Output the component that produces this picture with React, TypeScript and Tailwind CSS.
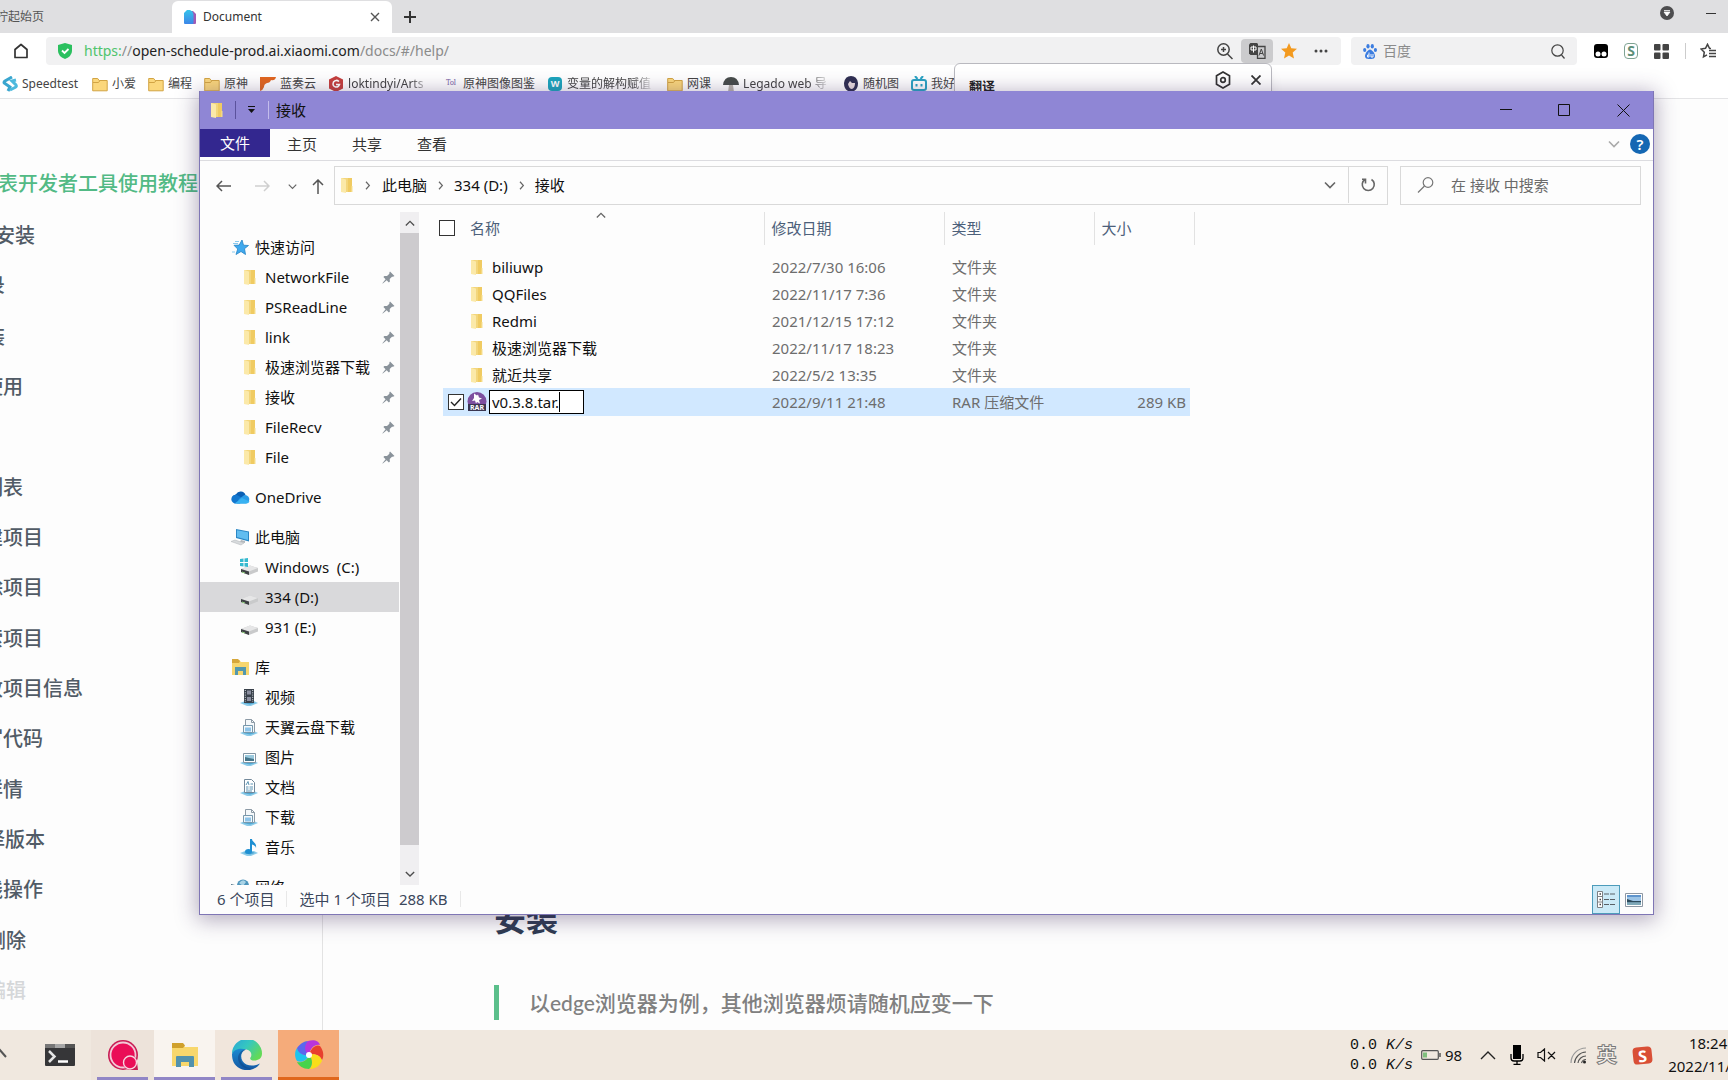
import type { ReactNode } from "react";

const docLinks = [
  { text: "IDE安装", width: "w-[35px]" },
  { text: "登录", width: "w-[5px]" },
  { text: "安装", width: "w-[5px]" },
  { text: "使用", width: "w-[23px]" },
  { text: "", width: "w-[23px]" },
  { text: "列表", width: "w-[23px]" },
  { text: "新建项目", width: "w-[43px]" },
  { text: "删除项目", width: "w-[43px]" },
  { text: "搜索项目", width: "w-[43px]" },
  { text: "修改项目信息", width: "w-[83px]" },
  { text: "编写代码", width: "w-[43px]" },
  { text: "详情", width: "w-[23px]" },
  { text: "选择版本", width: "w-[45px]" },
  { text: "在线操作", width: "w-[43px]" },
  { text: "删除", width: "w-[26px]" },
  { text: "编辑", width: "w-[26px]" },
];

const files = [
  { name: "biliuwp", date: "2022/7/30 16:06" },
  { name: "QQFiles", date: "2022/11/17 7:36" },
  { name: "Redmi", date: "2021/12/15 17:12" },
  { name: "极速浏览器下载", date: "2022/11/17 18:23" },
  { name: "就近共享", date: "2022/5/2 13:35" },
];

const quickAccess = ["NetworkFile", "PSReadLine", "link", "极速浏览器下载", "接收", "FileRecv", "File"];

function FolderIcon() {
  return (
    <svg width="13" height="16" viewBox="0 0 13 16" className="shrink-0">
      <path d="M1 1h7l4 0v14H1z" fill="#f3d67c" />
      <path d="M8 1h4v6l-1 8H8z" fill="#f0cb62" />
      <path d="M1 1l5 1.5V16L1 15z" fill="#fbe9a9" />
      <path d="M11.5 9h1v6h-1z" fill="#f8df8f" />
    </svg>
  );
}

function BookmarkFolder() {
  return (
    <svg width="16" height="16" viewBox="0 0 16 16">
      <path d="M.7 2.5h5l1.5 2h8v10.300H.7z" fill="#fbd77c" stroke="#d2a444" />
      <path d="M1 6.500h5.500l1.500-2" fill="none" stroke="#d2a444" />
    </svg>
  );
}

function PinIcon() {
  return (
    <svg width="13" height="13" viewBox="0 0 13 13" className="shrink-0">
      <path d="M8 .5l4.500 4.500-1.500.7-1 0-2.300 2.300.2 2.500-1 1L4.700 9.300.8 12.500.4 12.200 3.600 8.200 1.400 6l1-1 2.600.1L7.400 2.800 7.300 1.700z" fill="#8a939b" />
    </svg>
  );
}

function DriveIcon({ system = false }: { system?: boolean }) {
  return (
    <svg width="18" height="18" viewBox="0 0 18 18">
      <path d="M1 11l9-3.500 8 2.500v3.500l-9 3.500-8-3z" fill="#c9cacb" />
      <path d="M1 11l9-3.500 8 2.500-9 3.500z" fill="#e6e6e7" />
      <path d="M1 11l8 2.500V17l-8-3z" fill="#3e4144" />
      <path d="M2 14l3 1" stroke="#8fcf7c" />
      {system && <path d="M0 1l3.500-.5V4H0zM4.500.5L8 0v4H4.500zM0 5h3.500v3.500L0 8zM4.500 5H8v4l-3.500-.5z" fill="#35b9cf" />}
    </svg>
  );
}

function StarIcon() {
  return (
    <svg width="17" height="17" viewBox="0 0 17 17">
      <path d="M10 1l1.500 5.200 5 .3-4 3.200 1 5.800-4.500-3-5 3 1.700-5.500-3.700-3.700 5.200-.2z" fill="#3fa9ee" stroke="#2383c4" strokeWidth=".8" />
      <path d="M3 2.500h4M1 4.500h5M0 13h3" stroke="#7cc3ec" strokeWidth=".9" />
    </svg>
  );
}

function OneDriveIcon() {
  return (
    <svg width="20" height="14" viewBox="0 0 20 14">
      <path d="M6 4.200A5.200 5.200 0 0 1 15.500 5L10 10 3 6z" fill="#0a5fb4" />
      <path d="M4.500 13.500A4.400 4.400 0 1 1 7 5l7 4-4 4.500z" fill="#1277cf" />
      <path d="M9 9l5-3.800a4.200 4.200 0 0 1 2 8.300H7z" fill="#2a9be6" />
      <path d="M4.500 13.500h12a3.300 3.300 0 0 0 3-2L12 8z" fill="#38b2f2" />
    </svg>
  );
}

function ComputerIcon() {
  return (
    <svg width="20" height="18" viewBox="0 0 20 18">
      <path d="M6 1l13 2.500v10L6 10z" fill="#2b87c5" />
      <path d="M7 2.300l11 2v7.800L7 9z" fill="#62bdf0" />
      <path d="M11 12l4 1v2l-5-1z" fill="#b2b7bb" />
      <path d="M1 13.500l4-1.500 9 3-3 2z" fill="#d7dadc" stroke="#aeb3b7" strokeWidth=".5" />
    </svg>
  );
}

function LibraryIcon() {
  return (
    <svg width="19" height="17" viewBox="0 0 19 17">
      <path d="M1 1h7l2 2h8v13H1z" fill="#f7d66e" />
      <path d="M1 0h6l2 2-1 2H1z" fill="#d6a73a" />
      <path d="M4 16V8h11v8h-3v-4H7v4z" fill="#5398ae" />
    </svg>
  );
}

function LibraryItemIcon({ kind }: { kind: string }) {
  return (
    <svg width="18" height="17" viewBox="0 0 18 17">
      <path d="M0 14l5-2h9l4 2-7 3H7z" fill="#8ccbe9" />
      <path d="M3 14l3-1h7l2 1-5 1.500z" fill="#4fa7d3" />
      {kind === "video" && (
        <g>
          <path d="M4 0h10v14H4z" fill="#39414b" />
          <path d="M7 1.500h4v4H7zM7 8h4v4H7z" fill="#8b8fa0" />
          <path d="M5.300 1v12M12.700 1v12" stroke="#d8dde2" strokeDasharray="1 1.300" />
        </g>
      )}
      {kind === "download" && (
        <g>
          <path d="M5.500.5h6l3 3v10h-9z" fill="#f5f8fa" stroke="#8c9aa6" />
          <path d="M11.500.5v3h3" fill="none" stroke="#8c9aa6" />
          <path d="M3.500 6.500h9v7h-9z" fill="#f5f8fa" stroke="#7699ae" />
          <path d="M5 8.500h6v4H5z" fill="#8cc3e8" />
        </g>
      )}
      {kind === "picture" && (
        <g>
          <path d="M3.500 4.500h12v9h-12z" fill="#fff" stroke="#8296a4" />
          <path d="M5 6h9v6H5z" fill="#9ac9dd" />
          <path d="M5 8l4 1 5 1v2H5z" fill="#45768b" />
        </g>
      )}
      {kind === "document" && (
        <g>
          <path d="M4.500.5h7l3 3v10h-10z" fill="#fff" stroke="#72889a" />
          <path d="M6 6l2-3.500L9 6M10.500 5H13M6 8h2.500M9.500 8H13M6 10h2.500M9.500 10H13M6 12h6" fill="none" stroke="#4b89ab" strokeWidth=".9" />
        </g>
      )}
      {kind === "music" && (
        <g fill="#1e8fd2">
          <ellipse cx="8.500" cy="12.500" rx="3.500" ry="2.500" />
          <path d="M10 0h2c0 3 5 4 4 9-.5-2-2-3-4-3.500V13h-2z" />
        </g>
      )}
    </svg>
  );
}

function Chevron({ dir, size = 12, className = "" }: { dir: "up" | "down" | "right"; size?: number; className?: string }) {
  const paths = { up: "M1 9l5-5 5 5", down: "M1 3.500l5 5 5-5", right: "M4 1l4.500 5L4 11" };
  return (
    <svg width={size} height={size} viewBox="0 0 12 12" fill="none" stroke="currentColor" strokeWidth="1.600" className={className}>
      <path d={paths[dir]} />
    </svg>
  );
}

function Bookmark({ icon, text, fade = "" }: { icon?: ReactNode; text: string; fade?: string }) {
  return (
    <a href="#" className="flex shrink-0 items-center gap-1">
      <span className="flex size-4 items-center justify-center">{icon ?? <BookmarkFolder />}</span>
      <span className={"overflow-hidden whitespace-nowrap " + fade}>{text}</span>
    </a>
  );
}

const fadeRight = "[mask-image:linear-gradient(to_right,black_75%,transparent)]";

function Browser() {
  return (
    <header className="text-xs text-[#444]">
      <div className="flex h-[33px] items-end bg-[#dfdfe1]">
        <div className="flex w-[172px] items-center self-stretch">
          <button className="flex w-11 justify-end overflow-hidden whitespace-nowrap text-[#555]">柠起始页</button>
        </div>
        <div className="flex h-8 w-[220px] items-center rounded-t-md bg-white pr-2 pl-[11px]">
          <svg width="14" height="16" viewBox="0 0 14 16">
            <defs>
              <linearGradient id="doc" x1="0" y1="0" x2="0" y2="1">
                <stop offset="0" stopColor="#35c3ea" />
                <stop offset="1" stopColor="#3c86e8" />
              </linearGradient>
            </defs>
            <path d="M6 2h4l3 3v9q0 1-1 1H6z" fill="#a15bb5" />
            <path d="M4 1h3q3 1 3.500 4v9q0 1-1 1H2q-1 0-1-1V4z" fill="url(#doc)" />
          </svg>
          <span className="ml-[6px] flex-1 text-[#333]">Document</span>
          <button aria-label="关闭标签页" className="p-1">
            <svg width="10" height="10" viewBox="0 0 10 10" stroke="#555" strokeWidth="1.400">
              <path d="M1 1l8 8M9 1L1 9" />
            </svg>
          </button>
        </div>
        <button aria-label="新标签页" className="self-center px-3">
          <svg width="12" height="12" viewBox="0 0 12 12" stroke="#333" strokeWidth="2">
            <path d="M6 0v12M0 6h12" />
          </svg>
        </button>
        <div className="ml-auto flex items-center gap-8 self-start pt-[6px] pr-3">
          <button aria-label="下载">
            <svg width="14" height="14" viewBox="0 0 14 14">
              <circle cx="7" cy="7" r="7" fill="#4d4d4f" />
              <path d="M4 4.500h6M4 6h6l-3 4z" fill="#fff" stroke="#fff" strokeWidth=".8" />
            </svg>
          </button>
          <button aria-label="最小化浏览器">
            <svg width="10" height="10" viewBox="0 0 10 10" stroke="#333">
              <path d="M0 5.500h10" />
            </svg>
          </button>
        </div>
      </div>

      <div className="flex h-9 items-center bg-white pr-3 pl-[13px]">
        <button aria-label="主页">
          <svg width="16" height="16" viewBox="0 0 16 16" fill="none" stroke="#333" strokeWidth="1.700">
            <path d="M2 6.500L8 1.500l6 5v8H2z" strokeLinejoin="round" />
          </svg>
        </button>
        <div className="ml-[17px] flex h-7 flex-1 items-center rounded-sm bg-[#f1f1f2] pl-3">
          <svg width="14" height="16" viewBox="0 0 14 16">
            <path d="M7 0l7 2v6q0 5-7 8-7-3-7-8V2z" fill="#2bc05f" />
            <path d="M4 7.500l2.500 2.500L10.500 6" fill="none" stroke="#fff" strokeWidth="1.800" />
          </svg>
          <a href="#" className="ml-3 text-sm text-[#8b8b8b]">
            <span className="text-[#4fc46d]">https:</span>//
            <span className="text-[#222]">open-schedule-prod.ai.xiaomi.com</span>/docs/#/help/
          </a>
          <div className="ml-auto flex items-center">
            <button aria-label="缩放" className="px-2">
              <svg width="16" height="18" viewBox="0 0 16 18" fill="none" stroke="#444" strokeWidth="1.500">
                <circle cx="6.500" cy="7.500" r="5.700" />
                <path d="M6.500 5v5M4 7.500h5M10.500 12l5 5" />
              </svg>
            </button>
            <button aria-label="翻译" className="flex h-6 w-8 items-center justify-center rounded-sm bg-[#cbcbcd]">
              <svg width="17" height="16" viewBox="0 0 17 16">
                <path d="M1.500 0H8l1 1v11H1.500L0 10.500v-9z" fill="#444" />
                <path d="M2 4h5v3H2zM4.500 2.500v7" fill="none" stroke="#fff" />
                <path d="M9 3.500h7v12H8.500V12" fill="none" stroke="#444" strokeWidth="1.300" />
                <path d="M10 12.500L12.300 6l2.300 6.500M10.800 10.500h3" fill="none" stroke="#444" />
              </svg>
            </button>
            <button aria-label="收藏" className="px-2">
              <svg width="16" height="16" viewBox="0 0 16 16">
                <path d="M8 0l2.300 5.200 5.700.6-4.300 3.800L13 15.500 8 12.500l-5 3 1.300-5.900L0 5.800l5.700-.6z" fill="#f39a1f" />
              </svg>
            </button>
            <button aria-label="更多" className="px-2 pr-3">
              <svg width="16" height="4" viewBox="0 0 16 4" fill="#444">
                <circle cx="3" cy="2" r="1.500" />
                <circle cx="8" cy="2" r="1.500" />
                <circle cx="13" cy="2" r="1.500" />
              </svg>
            </button>
          </div>
        </div>
        <label className="ml-2.5 flex h-7 w-[226px] items-center gap-1.5 rounded-sm bg-[#f1f1f2] pr-3 pl-3">
          <svg width="14" height="15" viewBox="0 0 14 15" fill="#3c7de0" className="shrink-0">
            <ellipse cx="5" cy="2.200" rx="1.600" ry="2.200" />
            <ellipse cx="9.300" cy="2.200" rx="1.600" ry="2.200" />
            <ellipse cx="1.700" cy="6" rx="1.600" ry="2" />
            <ellipse cx="12.400" cy="6" rx="1.600" ry="2" />
            <path d="M7 5.500c2 0 5 4 5 6.500 0 3-3 3-5 3s-5 0-5-3C2 9.500 5 5.500 7 5.500z" />
            <path d="M6 8.500V13H4.500v-2H6M8 10v3h2v-3" fill="none" stroke="#fff" strokeWidth=".9" />
          </svg>
          <input aria-label="百度" placeholder="百度" className="w-0 flex-1 bg-transparent text-sm outline-none placeholder:text-[#8b8b8b]" />
          <svg width="14" height="15" viewBox="0 0 14 15" fill="none" stroke="#444" strokeWidth="1.200" className="shrink-0">
            <circle cx="6.500" cy="6.500" r="5.700" />
            <path d="M10.500 11l3 3.500" />
          </svg>
        </label>
        <div className="ml-[17px] flex items-center gap-4">
          <svg width="14" height="14" viewBox="0 0 14 14">
            <rect width="14" height="14" rx="3" fill="#000" />
            <circle cx="4" cy="10" r="2.500" fill="#fff" />
            <circle cx="10" cy="10" r="2.500" fill="#fff" />
          </svg>
          <span className="flex h-4 w-[14px] items-center justify-center rounded-sm border border-[#7fa393] text-sm font-bold text-[#5d8f79]">S</span>
          <svg width="15" height="15" viewBox="0 0 15 15" fill="#444">
            <rect width="6.500" height="6.500" rx="1" />
            <rect x="8.500" width="6.500" height="6.500" rx="1" />
            <rect y="8.500" width="6.500" height="6.500" rx="1" />
            <rect x="8.500" y="8.500" width="6.500" height="6.500" rx="1" />
          </svg>
          <span className="-mr-0.5 h-4 w-px bg-[#ccc]" />
          <button aria-label="收藏夹">
            <svg width="16" height="16" viewBox="0 0 16 16" fill="none" stroke="#444" strokeWidth="1.500">
              <path d="M11 5.500l-1.500-.2L7.500 1.300l-2 4-4.500.7 3.300 3.200-.8 4.600 3.500-2" />
              <path d="M9 7.500h7M9 10.500h7M9 13.500h7" />
            </svg>
          </button>
        </div>
      </div>

      <nav className="flex h-[30px] items-center gap-3 overflow-hidden border-b border-[#e4e4e6] bg-white pl-0.5">
        <Bookmark
          text="Speedtest"
          fade="w-[58px]"
          icon={
            <svg width="16" height="16" viewBox="0 0 16 16" fill="none" strokeWidth="3">
              <path d="M10 1L3 5q-2 1.500 0 2.500L8 11 6 15" stroke="#3aa6cf" />
              <path d="M14 4l-4 1 4 4q1 1.500-1 2.500L8 14" stroke="#4cb9dd" />
            </svg>
          }
        />
        <Bookmark text="小爱" />
        <Bookmark text="编程" />
        <Bookmark text="原神" />
        <Bookmark
          text="蓝奏云"
          icon={
            <svg width="16" height="14" viewBox="0 0 16 14">
              <path d="M0 0h16q-1 4-5 3-1 3-4 3-3 1-3 4-1 3-4 4z" fill="#e2661f" />
            </svg>
          }
        />
        <Bookmark
          text="loktindyi/Arts"
          fade={"w-[83px] " + fadeRight}
          icon={
            <svg width="14" height="16" viewBox="0 0 14 16">
              <path d="M7 0l7 3.500v9L7 16l-7-3.500v-9z" fill="#c63f3d" />
              <path d="M10 5.500Q7 3 4.500 6q-1.500 4 2 5 3 .5 4-2.500H7" fill="none" stroke="#fff" strokeWidth="1.500" />
            </svg>
          }
        />
        <Bookmark text="原神图像图鉴" icon={<span className="font-serif text-[8px] text-[#7a65a5]">Tol</span>} />
        <Bookmark
          text="变量的解构赋值"
          fade={"w-[88px] " + fadeRight}
          icon={<span className="flex size-[14px] items-center justify-center rounded-sm bg-[#1ba5bd] text-[9px] font-bold text-white">W</span>}
        />
        <Bookmark text="网课" />
        <Bookmark
          text="Legado web 导"
          fade={"w-[88px] " + fadeRight}
          icon={
            <svg width="16" height="16" viewBox="0 0 16 16">
              <path d="M0 9q1-8 8-8t8 8z" fill="#474c4a" />
              <path d="M6 9h4l1 7H5z" fill="#b8b3ac" />
            </svg>
          }
        />
        <Bookmark
          text="随机图"
          icon={
            <svg width="14" height="15" viewBox="0 0 14 15">
              <path d="M0 7q1-7 7-7t7 7q0 6-4 8H4Q0 13 0 7z" fill="#2f2f52" />
              <path d="M4 8l2-3 2 2 3 0q0 5-3 6-3 0-4-5z" fill="#e9dcdf" />
            </svg>
          }
        />
        <Bookmark
          text="我好"
          icon={
            <svg width="16" height="15" viewBox="0 0 16 15" fill="none" stroke="#2aa3c4" strokeWidth="2">
              <rect x="1" y="4" width="14" height="10" rx="2" />
              <path d="M4 0l2.500 3M12 0L9.500 3M5.500 8v2.500M10.500 8v2.500" />
            </svg>
          }
        />
      </nav>
    </header>
  );
}

function TranslatePopup() {
  return (
    <section className="absolute top-[63px] right-[456px] flex h-12 w-[318px] justify-between rounded-t-md border border-[#b9b9bf] bg-white pr-1.5 pl-[14px] shadow-lg">
      <h2 className="mt-[13px] text-[13px] font-semibold text-[#222]">翻译</h2>
      <div className="flex h-8 items-center gap-4">
        <button aria-label="设置">
          <svg width="16" height="18" viewBox="0 0 16 18" fill="none" stroke="#333" strokeWidth="1.700">
            <path d="M8 1l6.500 3.800v8.400L8 17l-6.500-3.800V4.800z" />
            <circle cx="8" cy="9" r="2.300" />
          </svg>
        </button>
        <button aria-label="关闭翻译" className="p-1">
          <svg width="10" height="10" viewBox="0 0 10 10" stroke="#333" strokeWidth="1.800">
            <path d="M.5.5l9 9M9.500.5l-9 9" />
          </svg>
        </button>
      </div>
    </section>
  );
}

function DocPage() {
  return (
    <main className="flex min-h-0 flex-1 bg-[#fdfdfd] font-medium">
      <aside className="flex w-[323px] shrink-0 flex-col border-r border-[#e3e3e3] pb-[14px] text-[20px] text-[#515b66]">
        <h1 className="mt-[68px] flex h-[34px] w-[198px] items-center justify-end overflow-hidden whitespace-nowrap text-[#52ba85]">
          课程表开发者工具使用教程
        </h1>
        <ul className="mt-2.5 flex flex-1 flex-col">
          {docLinks.map((link, i) => (
            <li key={i} className="flex flex-1 items-center">
              <a
                href="#"
                className={
                  "flex justify-end overflow-hidden leading-7 whitespace-nowrap " +
                  link.width +
                  (i === docLinks.length - 1 ? " text-[#d5d7d9]" : "")
                }
              >
                {link.text}
              </a>
            </li>
          ))}
        </ul>
      </aside>
      <article className="flex flex-1 flex-col justify-end pb-2.5 pl-[171px]">
        <h2 className="text-[32px] leading-10 font-semibold text-[#2f3b52]">安装</h2>
        <blockquote className="mt-[46px] border-l-[5px] border-[#5bbf8b] pl-[30px] font-['Lato','Noto_Sans_CJK_SC',sans-serif] text-[21px] leading-[35px] text-[#808080]">
          以edge浏览器为例，其他浏览器烦请随机应变一下
        </blockquote>
      </article>
    </main>
  );
}

function TreeRoot({ icon, text, children }: { icon: ReactNode; text: string; children?: ReactNode }) {
  return (
    <li className="mb-2.5">
      <a href="#" className="flex h-[30px] items-center pl-[30px]">
        <span className="flex w-5 justify-center">{icon}</span>
        <span className="ml-[5px]">{text}</span>
      </a>
      {children && <ul>{children}</ul>}
    </li>
  );
}

function TreeItem({ icon, text, pinned = false, selected = false }: { icon: ReactNode; text: string; pinned?: boolean; selected?: boolean }) {
  return (
    <li className={selected ? "bg-[#d9d9db]" : ""}>
      <a href="#" className="flex h-[30px] items-center pr-1 pl-10">
        <span className="flex w-[18px] justify-center">{icon}</span>
        <span className="ml-[7px] flex-1 whitespace-pre">{text}</span>
        {pinned && <PinIcon />}
      </a>
    </li>
  );
}

function NavTree() {
  return (
    <nav className="flex w-[219px] shrink-0 overflow-hidden">
      <ul className="w-[199px] pt-5">
        <TreeRoot icon={<StarIcon />} text="快速访问">
          {quickAccess.map((name) => (
            <TreeItem key={name} icon={<FolderIcon />} text={name} pinned />
          ))}
        </TreeRoot>
        <TreeRoot icon={<OneDriveIcon />} text="OneDrive" />
        <TreeRoot icon={<ComputerIcon />} text="此电脑">
          <TreeItem icon={<DriveIcon system />} text="Windows  (C:)" />
          <TreeItem icon={<DriveIcon />} text="334 (D:)" selected />
          <TreeItem icon={<DriveIcon />} text="931 (E:)" />
        </TreeRoot>
        <TreeRoot icon={<LibraryIcon />} text="库">
          <TreeItem icon={<LibraryItemIcon kind="video" />} text="视频" />
          <TreeItem icon={<LibraryItemIcon kind="download" />} text="天翼云盘下载" />
          <TreeItem icon={<LibraryItemIcon kind="picture" />} text="图片" />
          <TreeItem icon={<LibraryItemIcon kind="document" />} text="文档" />
          <TreeItem icon={<LibraryItemIcon kind="download" />} text="下载" />
          <TreeItem icon={<LibraryItemIcon kind="music" />} text="音乐" />
        </TreeRoot>
        <TreeRoot
          icon={
            <svg width="18" height="16" viewBox="0 0 18 16">
              <circle cx="12" cy="6.500" r="6" fill="#4c94bb" />
              <path d="M8 4q4-5 7-1l-3 4z" fill="#a9d3e6" />
              <path d="M0 5l8 2v6l-8-2z" fill="#4b7186" />
            </svg>
          }
          text="网络"
        />
      </ul>
      <div className="ml-px flex w-[19px] flex-col bg-[#f0eff1] text-[#4d4d4d]">
        <button aria-label="向上滚动" className="flex h-[21px] items-center justify-center">
          <Chevron dir="up" size={10} />
        </button>
        <div className="flex-1 bg-[#cdcbce]" />
        <button aria-label="向下滚动" className="flex h-10 items-center justify-center pt-[17px]">
          <Chevron dir="down" size={10} />
        </button>
      </div>
    </nav>
  );
}

function CheckBox({ checked = false, label }: { checked?: boolean; label: string }) {
  return (
    <span className="relative flex size-4 shrink-0">
      <input type="checkbox" aria-label={label} defaultChecked={checked} className="size-4 appearance-none border border-[#333] bg-white" />
      {checked && (
        <svg width="16" height="16" viewBox="0 0 16 16" fill="none" stroke="#222" strokeWidth="1.400" className="pointer-events-none absolute inset-0">
          <path d="M3 8l3.500 3.500L13 4.500" />
        </svg>
      )}
    </span>
  );
}

function FileTable() {
  return (
    <div className="min-w-0 flex-1 overflow-hidden">
      <table className="w-[775px] table-fixed border-collapse text-left">
        <colgroup>
          <col className="w-6" />
          <col className="w-[321px]" />
          <col className="w-[180px]" />
          <col className="w-[150px]" />
          <col className="w-24" />
          <col className="w-1" />
        </colgroup>
        <thead>
          <tr className="h-[33px] text-[#4c607a]">
            <th colSpan={2} className="relative border-r border-[#e2e2e2] p-0 pb-0.5 pl-5 font-normal">
              <span className="flex items-center gap-[15px]">
                <CheckBox label="全选" />
                名称
              </span>
              <Chevron dir="up" size={10} className="absolute -top-0.5 left-[177px] text-[#666]" />
            </th>
            <th className="border-r border-[#e2e2e2] p-0 pb-0.5 pl-[7px] font-normal">修改日期</th>
            <th className="border-r border-[#e2e2e2] p-0 pb-0.5 pl-[7px] font-normal">类型</th>
            <th colSpan={2} className="border-r border-[#e2e2e2] p-0 pb-0.5 pl-[7px] font-normal">大小</th>
          </tr>
          <tr className="h-2" />
        </thead>
        <tbody className="text-[#6d6d6d]">
          {files.map((file) => (
            <tr key={file.name} className="h-[27px]">
              <td className="p-0" />
              <td className="p-0 pl-[27px] text-[#111]">
                <span className="flex items-center gap-[9px]">
                  <FolderIcon />
                  {file.name}
                </span>
              </td>
              <td className="p-0 pl-2">{file.date}</td>
              <td className="p-0 pl-2">文件夹</td>
              <td className="p-0" />
            </tr>
          ))}
          <tr className="h-7">
            <td className="p-0" />
            <td className="bg-[#d1e8ff] p-0 pl-[5px]">
              <span className="flex items-center">
                <CheckBox checked label="v0.3.8.tar" />
                <svg width="20" height="20" viewBox="0 0 20 20" className="ml-[3px]">
                  <circle cx="10" cy="9.500" r="9.500" fill="#7d4f9f" />
                  <path d="M7 1.500l3 2 1-1 1 3 3 1-3 1.500 1 3.500-3-1.500-1 1.500-1-3-3 .5 2-3z" fill="#fff" />
                  <rect x="1" y="12" width="18" height="7" fill="#3a3550" />
                  <text x="10" y="18" textAnchor="middle" fontSize="7" fontWeight="700" fill="#fff">RAR</text>
                </svg>
                <span className="ml-0.5 flex h-6 w-[95px] items-center border border-black bg-white pl-0.5 text-[#111]">
                  <input aria-label="文件名" defaultValue="v0.3.8.tar." className="[field-sizing:content] bg-transparent outline-none" />
                  <span className="h-5 w-px bg-black" />
                </span>
              </span>
            </td>
            <td className="bg-[#d1e8ff] p-0 pl-2">2022/9/11 21:48</td>
            <td className="bg-[#d1e8ff] p-0 pl-2">RAR 压缩文件</td>
            <td className="bg-[#d1e8ff] p-0 pr-1 text-right">289 KB</td>
          </tr>
        </tbody>
      </table>
    </div>
  );
}

function Explorer() {
  return (
    <section className="absolute top-[91px] right-[74px] bottom-[165px] left-[199px] flex flex-col border border-t-0 border-[#7f76b5] bg-[#fdfdfd] text-[15px] leading-5 text-[#111] shadow-[0_3px_20px_2px_rgba(60,40,90,0.38)]">
      <div className="flex h-[38px] shrink-0 items-center bg-[#8f86d5] pl-2.5">
        <FolderIcon />
        <span className="ml-3 h-[18px] w-px bg-[#5b529c]" />
        <button aria-label="自定义快速访问工具栏" className="ml-3">
          <svg width="7" height="8" viewBox="0 0 7 8">
            <path d="M0 .5h7" stroke="#111" />
            <path d="M0 3h7L3.500 7z" fill="#111" />
          </svg>
        </button>
        <span className="ml-[13px] h-[18px] w-px bg-[#c3bdec]" />
        <h2 className="ml-[7px]">接收</h2>
        <div className="ml-auto flex h-full">
          <button aria-label="最小化" className="flex w-[58px] items-center justify-center">
            <svg width="12" height="12" viewBox="0 0 12 12" stroke="#111"><path d="M0 5.500h12" /></svg>
          </button>
          <button aria-label="最大化" className="flex w-[58px] items-center justify-center">
            <svg width="12" height="12" viewBox="0 0 12 12" stroke="#111" fill="none"><path d="M.5.5h11v11H.5z" /></svg>
          </button>
          <button aria-label="关闭" className="flex w-[60px] items-center justify-center">
            <svg width="13" height="13" viewBox="0 0 13 13" stroke="#111"><path d="M.5.5l12 12M12.500.5l-12 12" /></svg>
          </button>
        </div>
      </div>

      <div className="flex h-8 shrink-0 items-start border-b border-[#dcdce0] text-[#333]">
        <button className="h-7 w-[70px] bg-[#33278f] text-white">文件</button>
        <div className="flex h-[30px] items-center gap-[35px] pl-[17px]">
          <button>主页</button>
          <button>共享</button>
          <button>查看</button>
        </div>
        <div className="ml-auto flex h-[30px] items-center gap-2.5 pr-[3px]">
          <button aria-label="展开功能区" className="text-[#aaa]">
            <Chevron dir="down" />
          </button>
          <button aria-label="帮助" className="flex size-5 items-center justify-center rounded-full bg-[#1467b3] font-semibold text-white">?</button>
        </div>
      </div>

      <div className="flex h-[51px] shrink-0 items-start pt-[5px] pr-3 text-[#666]">
        <div className="flex h-10 w-[134px] shrink-0 items-center pl-4">
          <button aria-label="后退">
            <svg width="15" height="12" viewBox="0 0 15 12" fill="none" stroke="#555" strokeWidth="1.500"><path d="M6 1L1 6l5 5M1 6h14" /></svg>
          </button>
          <button aria-label="前进" className="ml-6">
            <svg width="15" height="12" viewBox="0 0 15 12" fill="none" stroke="#cfcfcf" strokeWidth="1.500"><path d="M9 1l5 5-5 5M14 6H0" /></svg>
          </button>
          <button aria-label="最近浏览的位置" className="ml-[18px]">
            <Chevron dir="down" size={9} />
          </button>
          <button aria-label="上移" className="ml-[15px]">
            <svg width="12" height="15" viewBox="0 0 12 15" fill="none" stroke="#555" strokeWidth="1.500"><path d="M1 6l5-5 5 5M6 1v14" /></svg>
          </button>
        </div>
        <div className="flex h-[39px] flex-1 items-center border border-[#d9d9d9] pb-px pl-[5px]">
          <FolderIcon />
          <Chevron dir="right" size={9} className="mx-2.5" />
          <button className="text-[#111]">此电脑</button>
          <Chevron dir="right" size={9} className="mx-[9px]" />
          <button className="text-[#111]">334 (D:)</button>
          <Chevron dir="right" size={9} className="mx-[9px]" />
          <button className="text-[#111]">接收</button>
          <button aria-label="以前的位置" className="ml-auto px-3">
            <Chevron dir="down" />
          </button>
          <button aria-label="刷新" className="flex h-full w-[39px] items-center justify-center border-l border-[#d9d9d9]">
            <svg width="15" height="16" viewBox="0 0 15 16" fill="none" stroke="#666" strokeWidth="1.600">
              <path d="M10.500 2.500a6 6 0 1 1-6.500 0M4.500 6.500V2.300H1" />
            </svg>
          </button>
        </div>
        <label className="ml-3 flex h-[39px] w-[241px] items-center border border-[#d9d9d9] pb-px pl-4">
          <svg width="17" height="16" viewBox="0 0 17 16" fill="none" stroke="#777" strokeWidth="1.200" className="shrink-0">
            <circle cx="11" cy="5.500" r="4.800" />
            <path d="M7.500 9L1 15.500" />
          </svg>
          <input aria-label="在 接收 中搜索" placeholder="在 接收 中搜索" className="ml-[17px] w-0 flex-1 bg-transparent outline-none placeholder:text-[#6a6a6a]" />
        </label>
      </div>

      <div className="flex min-h-0 flex-1">
        <NavTree />
        <FileTable />
      </div>

      <footer className="flex h-[29px] shrink-0 items-center pl-[17px] text-[#3b475c]">
        <div className="flex items-center pb-0.5">
          <span>6 个项目</span>
          <span className="mx-3 h-4 w-px bg-[#e8e8e8]" />
          <span>选中 1 个项目</span>
          <span className="ml-2">288 KB</span>
          <span className="ml-3 h-4 w-px bg-[#e8e8e8]" />
        </div>
        <div className="ml-auto flex h-full items-center gap-[5px] pr-2.5">
          <button aria-label="详细信息" className="flex h-full w-7 items-center justify-center border border-[#4d9cbb] bg-[#cbeaf7]">
            <svg width="18" height="17" viewBox="0 0 18 17" fill="none" stroke="#7d8083">
              <path d="M.5.5h5v16h-5zM.5 5.500h5M.5 11h5" fill="#fff" />
              <path d="M7 3h5M13 3h5M7 8.500h5M13 8.500h5M7 13.500h5M13 13.500h5" stroke="#596066" />
              <path d="M2.500 3h1.500M2.500 8.500h1.500M2.500 13.500h1.500" stroke="#444" strokeWidth="1.500" />
            </svg>
          </button>
          <button aria-label="大缩略图">
            <svg width="18" height="14" viewBox="0 0 18 14">
              <path d="M.5.5h17v13H.5z" fill="#fff" stroke="#8d97a3" />
              <path d="M2 2h14v10H2z" fill="#9cc4e6" />
              <path d="M2 2h14v2H2z" fill="#5f94cc" />
              <path d="M2 6l6 2 8 0v1.500H2z" fill="#2c4a5b" />
              <path d="M2 9.500h14V12H2z" fill="#7fa9b8" />
            </svg>
          </button>
        </div>
      </footer>
    </section>
  );
}

function TaskButton({ label, className = "", bar = "", children }: { label: string; className?: string; bar?: string; children: ReactNode }) {
  return (
    <button aria-label={label} className={"flex h-full flex-col items-center " + className}>
      <span className="flex flex-1 items-center pt-0.5">{children}</span>
      <span className={"h-[3px] " + bar} />
    </button>
  );
}

function Taskbar() {
  return (
    <footer className="flex h-[50px] shrink-0 items-center overflow-hidden bg-[#f0e8df] text-[#111]">
      <button aria-label="展开" className="w-[29px]">
        <svg width="7" height="14" viewBox="0 0 7 14" fill="none" stroke="#555" strokeWidth="2">
          <path d="M-5 6L-1 1l7 8" />
        </svg>
      </button>
      <TaskButton label="终端" className="w-[62px]">
        <svg width="30" height="22" viewBox="0 0 30 22">
          <rect width="30" height="22" rx="1" fill="#363638" />
          <path d="M0 0h10v4H0z" fill="#777" />
          <path d="M10 0h10v4H10z" fill="#a6a6a6" />
          <path d="M20 0h10v4H20z" fill="#555" />
          <path d="M4 7l5.500 5.500L4 18" fill="none" stroke="#e6e6e6" strokeWidth="2.500" />
          <path d="M13 17.500h10" stroke="#fff" strokeWidth="2.500" />
        </svg>
      </TaskButton>
      <TaskButton label="录屏" className="w-[63px] bg-[#ede3da]" bar="w-[51px] bg-[#9186c6]">
        <svg width="30" height="30" viewBox="0 0 30 30">
          <circle cx="15" cy="15" r="15" fill="#c81c54" />
          <circle cx="15" cy="15" r="12.500" fill="#ea0d57" stroke="#f3c9d6" strokeWidth="1.800" />
          <path d="M15 22a7 7 0 1 1 14 0l1 8h-8a7 7 0 0 1-7-8z" fill="#c81c54" />
          <circle cx="22" cy="22.500" r="6.500" fill="#ea0d57" stroke="#f8d5e0" strokeWidth="1.400" />
        </svg>
      </TaskButton>
      <TaskButton label="文件资源管理器" className="w-[61px] bg-[#f9f4ef]" bar="w-full bg-[#9186c6]">
        <svg width="28" height="24" viewBox="0 0 28 24">
          <path d="M1 2h11l2 2h13v19H1z" fill="#f8d76c" />
          <path d="M1 0h11l2 2.500L12 5H1z" fill="#d0a02c" />
          <path d="M5 24V14q0-1 1-1h16q1 0 1 1v10h-5v-5h-8v5z" fill="#5292ad" />
        </svg>
      </TaskButton>
      <TaskButton label="Microsoft Edge" className="w-[63px] bg-[#f1e6dc]" bar="w-[51px] bg-[#9186c6]">
        <svg width="30" height="30" viewBox="0 0 30 30">
          <defs>
            <linearGradient id="edgeTop" x1="0" y1="0" x2="1" y2=".6">
              <stop offset="0" stopColor="#2aa5d8" />
              <stop offset=".5" stopColor="#35c7c0" />
              <stop offset="1" stopColor="#63da57" />
            </linearGradient>
            <linearGradient id="edgeLow" x1="0" y1="0" x2="0" y2="1">
              <stop offset="0" stopColor="#1b8ad2" />
              <stop offset="1" stopColor="#1457a2" />
            </linearGradient>
          </defs>
          <path d="M0 14A15 15 0 0 1 30 13.500c0 5-4 7-7.500 7s-5-1.500-4-3c2-3 .5-7-4-8C8 8.500 2 11 0 14z" fill="url(#edgeTop)" />
          <path d="M0 14C2 9 9 7.500 14 9.500 9 11 8 17 10.500 21c3 5 11 6 17.500 2.500C23 31 14 31.500 8 28.500 2 25.500 0 20 0 14z" fill="url(#edgeLow)" />
          <path d="M14 9.500C8 12 7 18 10 23c3 4.500 8 6 12 5-10 3-16-4-16-10 0-4 3-8 8-8.500z" fill="#124a8b" opacity=".6" />
        </svg>
      </TaskButton>
      <TaskButton label="极速浏览器" className="w-[61px] bg-[#f5ab7a]" bar="w-full bg-[#e0671c]">
        <svg width="30" height="30" viewBox="0 0 30 30">
          <path d="M15 15C9 13 8 4 14 1c6-2 11 0 12 4-5-1-10 3-11 10z" fill="#b834dc" />
          <path d="M15 15C17 8 22 4 26 6c4 5 4 11 2 14-2-5-8-7-13-5z" fill="#e8402e" />
          <path d="M15 15c6-2 12 1 13 6-3 6-8 8-12 8 3-4 3-10-1-14z" fill="#f9de1a" />
          <path d="M15 15c4 4 4 11 0 14-6 0-10-3-12-7 5 1 10-1 12-7z" fill="#46d34b" />
          <path d="M15 15c-2 6-8 8-12 6C0 16 1 11 3 8c2 5 7 8 12 7z" fill="#1fc4ec" />
          <path d="M15 15C9 16 4 13 3 8c3-4 7-7 11-7-4 4-4 11 1 14z" fill="#5a67ee" />
          <circle cx="15" cy="15" r="3" fill="#fff" />
        </svg>
      </TaskButton>

      <div className="-mr-5 ml-auto flex shrink-0 items-center text-[15px]">
        <div className="pt-0.5 font-['Liberation_Mono',monospace] leading-5">
          <div>0.0 <i>K/s</i></div>
          <div>0.0 <i>K/s</i></div>
        </div>
        <svg width="20" height="10" viewBox="0 0 20 10" className="ml-2">
          <rect x=".7" y=".7" width="16.600" height="8.600" rx="1" fill="none" stroke="#555" strokeWidth="1.200" />
          <rect x="2" y="2.500" width="4" height="5" fill="#7fbf7d" />
          <path d="M19 3v4" stroke="#555" strokeWidth="1.500" />
        </svg>
        <span className="ml-1">98</span>
        <button aria-label="显示隐藏的图标" className="ml-[18px]">
          <svg width="16" height="10" viewBox="0 0 16 10" fill="none" stroke="#222" strokeWidth="1.400"><path d="M1 9l7-7 7 7" /></svg>
        </button>
        <svg width="14" height="20" viewBox="0 0 14 20" className="ml-[14px]" fill="none" stroke="#000" strokeWidth="1.300">
          <path d="M3 0h8v14H3z" fill="#000" stroke="none" />
          <path d="M1 9v4q0 3 3 3h6q3 0 3-3V9M7 16v3M3.500 19.300h7" />
        </svg>
        <svg width="19" height="14" viewBox="0 0 19 14" className="ml-[13px]" fill="none" stroke="#111" strokeWidth="1.200">
          <path d="M1 4.500h2.500L7.500 1v12L3.500 9.500H1zM11 4l7 7M18 4l-7 7" />
        </svg>
        <svg width="17" height="17" viewBox="0 0 17 17" className="ml-[14px]" fill="none" stroke="#555" strokeWidth="1.200">
          <path d="M1 16A15 15 0 0 1 16 1" stroke="#999" />
          <path d="M4.500 16A12 12 0 0 1 16 5M8 16a8 8 0 0 1 8-7" />
          <path d="M11.500 16a5 5 0 0 1 4.500-3.500" />
          <circle cx="14.500" cy="15" r="1.500" fill="#222" stroke="none" />
        </svg>
        <span className="ml-2.5 text-[19px] leading-6 text-[#f4efe9] [-webkit-text-stroke:2px_#777] [paint-order:stroke_fill]">英</span>
        <span className="ml-[17px] flex h-[17px] w-[19px] -rotate-6 items-center justify-center rounded-sm bg-[#d94f36] text-base font-bold text-white">S</span>
        <div className="ml-4 text-center leading-[23px] whitespace-nowrap">
          <div>18:24</div>
          <div>2022/11/17</div>
        </div>
      </div>
    </footer>
  );
}

export default function App() {
  return (
    <div className="relative flex h-screen flex-col overflow-hidden bg-white font-['Noto_Sans','Noto_Sans_CJK_SC',sans-serif]">
      <Browser />
      <DocPage />
      <Taskbar />
      <TranslatePopup />
      <Explorer />
    </div>
  );
}
